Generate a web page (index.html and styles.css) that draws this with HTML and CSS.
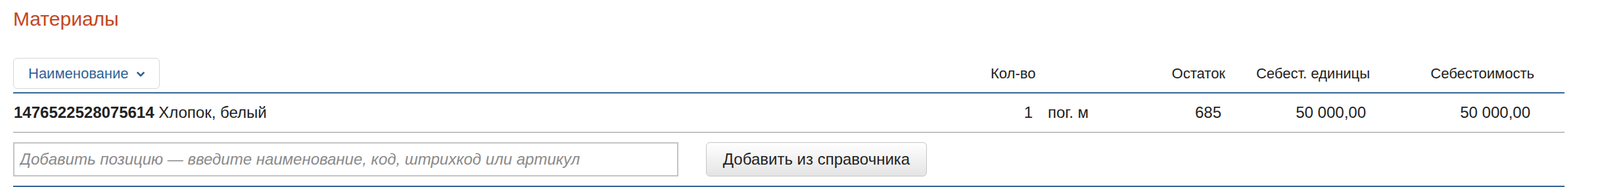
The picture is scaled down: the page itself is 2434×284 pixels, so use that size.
FILE: index.html
```html
<!DOCTYPE html>
<html lang="ru">
<head>
    <meta charset="UTF-8">
    <title>Материалы</title>
    <link rel="stylesheet" href="styles.css">
</head>
<body>
<div class="container">
    <h2 class="title">Материалы</h2>
    <table class="materials">
        <colgroup>
            <col class="col-name">
            <col class="col-qty">
            <col class="col-unit">
            <col class="col-rest">
            <col class="col-price">
            <col class="col-sum">
            <col class="col-tail">
        </colgroup>
        <thead>
        <tr>
            <th class="name-head">
                <button class="sort-btn" type="button">
                    Наименование
                    <svg class="caret" width="12" height="8" viewBox="0 0 12 8">
                        <path d="M1.5 1.5 L6 6 L10.5 1.5" fill="none" stroke="#2f6399" stroke-width="2.6" stroke-linecap="round" stroke-linejoin="round"/>
                    </svg>
                </button>
            </th>
            <th class="qty-head" colspan="2">Кол-во</th>
            <th class="num">Остаток</th>
            <th class="num">Себест. единицы</th>
            <th class="num">Себестоимость</th>
            <th></th>
        </tr>
        </thead>
        <tbody>
        <tr class="item">
            <td><b>1476522528075614</b> Хлопок, белый</td>
            <td class="num qty">1</td>
            <td class="unit">пог. м</td>
            <td class="num">685</td>
            <td class="num">50 000,00</td>
            <td class="num">50 000,00</td>
            <td></td>
        </tr>
        <tr class="add-row">
            <td colspan="7">
                <div class="add-line">
                    <input type="text" class="add-input" placeholder="Добавить позицию — введите наименование, код, штрихкод или артикул">
                    <button type="button" class="add-btn">Добавить из справочника</button>
                </div>
            </td>
        </tr>
        </tbody>
    </table>
</div>
</body>
</html>
```

FILE: styles.css
```css
body {
    font-family: "Liberation Sans", Arial, sans-serif;
    margin: 0;
    padding: 0;
    background-color: #fff;
    color: #222;
}
.container {
    padding: 0 54px 0 20px;
}
.title {
    margin: 0;
    padding-top: 12px;
    height: 76px;
    font-size: 30px;
    font-weight: normal;
    color: #c4461d;
}
.materials {
    width: 100%;
    border-collapse: collapse;
    table-layout: fixed;
    font-size: 24px;
}
.col-name { width: auto; }
.col-qty { width: 90px; }
.col-unit { width: 120px; }
.col-rest { width: 170px; }
.col-price { width: 220px; }
.col-sum { width: 250px; }
.col-tail { width: 40px; }
.materials th {
    font-size: 22px;
    font-weight: normal;
    text-align: left;
    height: 47px;
    padding: 0 0 5px 0;
    border-bottom: 2px solid #336699;
    vertical-align: middle;
    white-space: nowrap;
}
.materials th.num {
    text-align: right;
    padding-right: 6px;
}
.materials th.qty-head {
    padding-left: 17px;
}
.sort-btn {
    display: flex;
    align-items: center;
    gap: 12px;
    height: 47px;
    padding: 0 22px;
    font-family: inherit;
    font-size: 22px;
    color: #2f6399;
    background: #fff;
    border: 1.5px solid #d6d6d6;
    border-radius: 6px;
    cursor: pointer;
}
.caret {
    margin-top: 3px;
}
.item td {
    height: 56px;
    border-bottom: 2px solid #c2c2c2;
    vertical-align: middle;
    white-space: nowrap;
}
.materials td.num {
    text-align: right;
    padding-right: 12px;
}
.item td.qty {
    padding-right: 9px;
}
.item td.unit {
    padding-left: 14px;
}
.add-row td {
    padding: 14px 0 14px 0;
    border-bottom: 2px solid #336699;
}
.add-line {
    display: flex;
    align-items: center;
    gap: 42px;
}
.add-input {
    width: 1012px;
    height: 52px;
    box-sizing: border-box;
    padding: 0 8px;
    font-family: inherit;
    font-size: 24px;
    border: 2px solid #c4c4c4;
    border-radius: 0;
    outline: none;
}
.add-input::placeholder {
    color: #8a8a8a;
    font-style: italic;
}
.add-btn {
    height: 52px;
    width: 336px;
    font-family: inherit;
    font-size: 24px;
    color: #222;
    background: linear-gradient(#ffffff, #e4e4e4);
    border: 1.5px solid #c6c6c6;
    border-radius: 6px;
    cursor: pointer;
}
```
